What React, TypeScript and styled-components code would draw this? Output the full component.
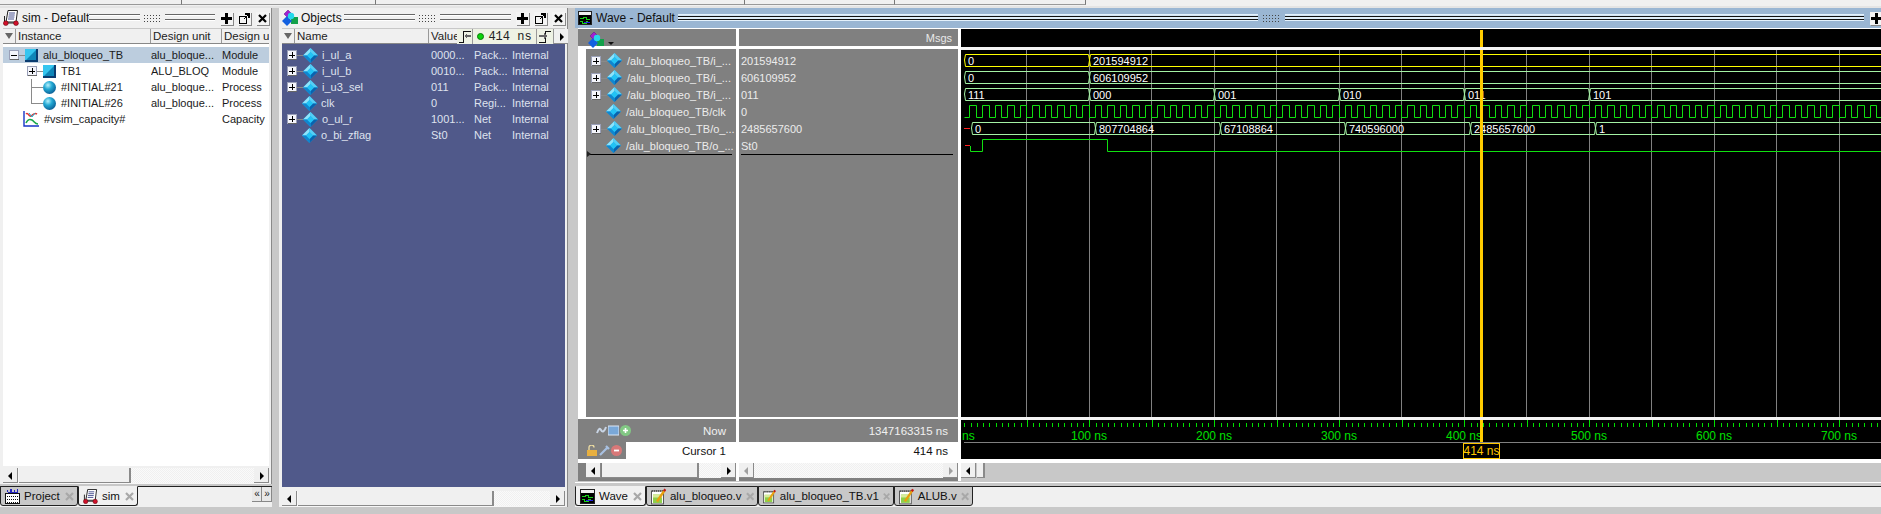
import React from 'react'
import styled, { createGlobalStyle } from 'styled-components'

const GlobalStyle = createGlobalStyle`
  html, body { margin: 0; padding: 0; background: #c8c8c8; overflow: hidden; }
  body { font-family: "Liberation Sans", Arial, sans-serif; font-size: 11px; color: #1a1a1a; }
`

const Desk = styled.div`
  width: 1881px;
  height: 514px;
  display: flex;
  flex-direction: column;
  overflow: hidden;
  background: #c8c8c8;
`

const ToolStrip = styled.div`
  display: flex;
  height: 6px;
  background: #f0f0f0;
  border-bottom: 2px solid #e4e4e4;
`

const ToolCell = styled.div<{ $w: number }>`
  width: ${p => p.$w}px;
  height: 5px;
  box-sizing: border-box;
  border-right: 1px solid #777;
  border-bottom: 1px solid #999;
`

const Columns = styled.div`
  display: flex;
  gap: 7px;
  height: 500px;
`

const Column = styled.div<{ $w: number }>`
  width: ${p => p.$w}px;
  display: flex;
  flex-direction: column;
  flex: none;
  overflow: hidden;
`

const Pane = styled.div<{ $h: number; $after?: number }>`
  position: relative;
  height: ${p => p.$h}px;
  margin-bottom: ${p => p.$after ?? 0}px;
  box-sizing: border-box;
  display: flex;
  flex-direction: column;
  background: #f0f0f0;
  padding: 0 2px 0 3px;
  border-right: 1px solid #8a8a8a;
  flex: none;
`

const TitleBar = styled.div<{ $blue?: boolean }>`
  height: 20px;
  display: flex;
  align-items: center;
  gap: 3px;
  flex: none;
  background: ${p => (p.$blue ? '#9ab6d3' : '#f0f0f0')};
`

const TitleText = styled.span<{ $w: number }>`
  width: ${p => p.$w}px;
  font-size: 12px;
  color: #111;
  white-space: nowrap;
  flex: none;
  margin-right: 2px;
`

const GripLines = styled.div<{ $blue?: boolean }>`
  flex: 1;
  height: 8px;
  background: ${p =>
    p.$blue
      ? 'linear-gradient(#e4f1fb 0 1px, #cfe2f3 1px 2px, #111 2px 3px, #dfeefa 3px 5px, #111 5px 6px, #e4f1fb 6px 7px, #9ab6d3 7px 8px)'
      : 'linear-gradient(#666 0 1px, #fff 1px 2px, #f0f0f0 2px 5px, #666 5px 6px, #fff 6px 7px, #f0f0f0 7px 8px)'};
`

const GripDots = styled.div`
  width: 19px;
  height: 8px;
  flex: none;
  background-image: radial-gradient(#444 0.7px, transparent 0.9px);
  background-size: 3px 3px;
`

const TitleButton = styled.button`
  width: 13px;
  height: 13px;
  padding: 0;
  margin-left: 2px;
  flex: none;
  display: flex;
  align-items: center;
  justify-content: center;
  background: #f4f4f4;
  border: 0;
  box-shadow: 1px 1px 0 #888;
`

const HeaderRow = styled.div`
  height: 16px;
  display: flex;
  flex: none;
  background: #f0f0f0;
  border-top: 1px solid #c8c8c8;
  border-bottom: 1px solid #888;
  box-sizing: border-box;
  overflow: hidden;
`

const FilterButton = styled.div`
  width: 12px;
  flex: none;
  position: relative;
  border-right: 1px solid #999;
  &::after {
    content: '';
    position: absolute;
    left: 2px;
    top: 4px;
    border: 4px solid transparent;
    border-top: 6px solid #666;
    border-bottom: 0;
  }
`

const HeaderCell = styled.div<{ $w: number }>`
  width: ${p => p.$w}px;
  flex: none;
  box-sizing: border-box;
  padding-left: 2px;
  line-height: 15px;
  font-size: 11.5px;
  color: #222;
  white-space: nowrap;
  overflow: hidden;
  border-right: 1px solid #999;
`

const TreeBody = styled.div`
  flex: 1;
  background: #fff;
  padding-top: 3px;
`

const ListBody = styled.div`
  flex: 1;
  background: #50598a;
  padding-top: 3px;
  color: #dfe2ee;
`

const Row = styled.div<{ $cols: string; $selected?: boolean }>`
  height: 16px;
  display: grid;
  grid-template-columns: ${p => p.$cols};
  align-items: center;
  background: ${p => (p.$selected ? '#bccdde' : 'transparent')};
`

const NameCell = styled.div<{ $indent: number }>`
  display: flex;
  align-items: center;
  height: 16px;
  padding-left: ${p => p.$indent}px;
  white-space: nowrap;
`

const Label = styled.span<{ $gap?: number }>`
  margin-left: ${p => p.$gap ?? 5}px;
`

const Cell = styled.div`
  white-space: nowrap;
  overflow: hidden;
`

const ScrollRow = styled.div<{ $bg?: string; $h?: number; $pad?: number; $top?: number }>`
  height: ${p => p.$h ?? 16}px;
  margin-top: ${p => p.$top ?? 0}px;
  display: flex;
  align-items: ${p => (p.$h ? 'flex-start' : 'stretch')};
  flex: none;
  padding-left: ${p => p.$pad ?? 0}px;
  background: ${p => p.$bg ?? '#f7f7f7'};
  box-sizing: border-box;
`

const ScrollBtn = styled.div<{ $right?: boolean; $off?: boolean }>`
  width: 15px;
  height: 15px;
  flex: none;
  position: relative;
  background: #f0f0f0;
  box-shadow: inset -1px -1px 0 #8a8a8a;
  &::after {
    content: '';
    position: absolute;
    top: 4px;
    left: ${p => (p.$right ? 6 : 5)}px;
    border-style: solid;
    border-color: transparent;
    border-width: 4px 0;
    ${p => (p.$right ? 'border-left-width: 4px;' : 'border-right-width: 4px;')}
    ${p => (p.$right ? 'border-left-color' : 'border-right-color')}: ${p => (p.$off ? '#a0a0a0' : '#000')};
  }
`

const ScrollThumb = styled.div<{ $w: number }>`
  width: ${p => p.$w}px;
  height: 15px;
  flex: none;
  margin-left: 1px;
  background: #f0f0f0;
  box-shadow: inset -2px -1px 0 #8a8a8a;
`

const ScrollTrack = styled.div<{ $bg?: string }>`
  flex: 1;
  height: 15px;
  background: ${p => p.$bg ?? 'repeating-conic-gradient(#f0f0f0 0 25%, #fafafa 0 50%) 0 0 / 2px 2px'};
`

const TabBar = styled.div`
  height: 21px;
  display: flex;
  align-items: flex-start;
  flex: none;
  background: #f0f0f0;
  border-top: 1px solid #222;
  box-sizing: border-box;
  position: relative;
`

const Tab = styled.div<{ $w: number; $active?: boolean }>`
  width: ${p => p.$w}px;
  height: 20px;
  box-sizing: border-box;
  display: flex;
  align-items: center;
  gap: 4px;
  padding: 0 3px 0 4px;
  margin-top: -1px;
  flex: none;
  font-size: 11.5px;
  background: ${p => (p.$active ? '#f0f0f0' : '#c8c8c8')};
  color: #111;
  border: 1px solid #222;
  border-top-color: ${p => (p.$active ? '#f0f0f0' : '#222')};
  border-radius: 0 0 3px 3px;
  white-space: nowrap;
  & > svg:last-child { margin-left: auto; }
`

const TabArrows = styled.div`
  margin-left: auto;
  display: flex;
`

const TabArrow = styled.div`
  width: 10px;
  height: 15px;
  background: #e8e8e8;
  box-shadow: inset -1px -1px 0 #888;
  font-size: 10px;
  line-height: 14px;
  text-align: center;
  color: #222;
`

const TimeBar = styled.div`
  position: absolute;
  left: 178px;
  top: 21px;
  width: 110px;
  height: 15px;
  display: flex;
  background: #eef2e4;
`

const TimeBtn = styled.div<{ $w: number }>`
  width: ${p => p.$w}px;
  flex: none;
  display: flex;
  align-items: center;
  justify-content: center;
  gap: 4px;
  box-sizing: border-box;
  border-right: 1px solid #999;
  font-family: "Liberation Mono", "Courier New", monospace;
  font-size: 12px;
  color: #222;
`

const GreenDot = styled.span`
  width: 7px;
  height: 7px;
  border-radius: 50%;
  background: #0bd40b;
  border: 1px solid #087a08;
  box-sizing: border-box;
`

/* wave window */
const WavePane = styled.div`
  height: 475px;
  margin-bottom: 3px;
  flex: none;
  display: flex;
  flex-direction: column;
  background: #c8c8c8;
`

const WaveTitle = styled(TitleBar)`
  width: 1346px;
  padding-left: 3px;
  gap: 4px;
  box-sizing: border-box;
`

const WaveGrid = styled.div`
  display: grid;
  grid-template-columns: 158px 219px 921px;
  column-gap: 3px;
  padding: 1px 0 0 3px;
  background: linear-gradient(90deg, #c8c8c8 0 3px, #fff 3px);
  height: 452px;
`

const WaveCol = styled.div`
  display: flex;
  flex-direction: column;
  min-width: 0;
`

const ColHeader = styled.div`
  height: 17px;
  flex: none;
  display: flex;
  align-items: flex-start;
  justify-content: space-between;
  padding: 3px 6px 0 10px;
  box-sizing: border-box;
  background: #808080;
  color: #e8e8e8;
`

const HeaderPicker = styled.div`
  display: flex;
  align-items: flex-end;
  gap: 4px;
  height: 16px;
  &::after {
    content: '';
    margin-bottom: 3px;
    border: 3px solid transparent;
    border-top: 3px solid #111;
    border-bottom: 0;
  }
`

const ColBody = styled.div<{ $gutter?: boolean }>`
  height: 368px;
  margin-top: 3px;
  flex: none;
  padding-top: 3px;
  box-sizing: border-box;
  color: #ececec;
  background: ${p => (p.$gutter ? 'linear-gradient(90deg, #fff 0 8px, #808080 8px)' : '#808080')};
`

const SignalRow = styled.div<{ $indent?: number }>`
  height: 17px;
  display: flex;
  align-items: center;
  padding-left: ${p => p.$indent ?? 0}px;
  white-space: nowrap;
`

const RuleLine = styled.div<{ $left: number; $right: number; $marker?: boolean }>`
  position: relative;
  height: 1px;
  margin: 0 ${p => p.$right}px 0 ${p => p.$left}px;
  background: #000;
  ${p =>
    p.$marker &&
    `&::before {
      content: '';
      position: absolute;
      left: -3px;
      top: -3px;
      border: 3px solid transparent;
      border-left: 4px solid #222;
      border-right: 0;
    }`}
`

const NowRow = styled.div<{ $h: number; $white?: boolean; $pad: number }>`
  height: ${p => p.$h}px;
  flex: none;
  display: flex;
  align-items: center;
  justify-content: flex-end;
  padding-right: ${p => p.$pad}px;
  color: ${p => (p.$white ? '#111' : '#f0f0f0')};
  background: ${p => (p.$white ? '#fff' : '#808080')};
  font-size: 11.5px;
`

const CursorNames = styled.div`
  height: 17px;
  flex: none;
  display: flex;
  background: #808080;
`

const FooterNowRow = styled.div`
  height: 23px;
  margin-top: 2px;
  flex: none;
  display: flex;
  align-items: center;
  justify-content: space-between;
  padding: 0 10px 0 9px;
  background: #808080;
  color: #f0f0f0;
  font-size: 11.5px;
`

const FooterIcons = styled.div`
  display: flex;
  align-items: center;
  gap: 1px;
  width: 48px;
  flex: none;
  padding-left: 9px;
  box-sizing: border-box;
`

const CursorText = styled.div`
  flex: 1;
  background: #fff;
  color: #111;
  text-align: right;
  padding-right: 10px;
  line-height: 18px;
  font-size: 11.5px;
`

const Canvas = styled.svg`
  display: block;
  flex: none;
  background: #000;
  font-family: "Liberation Sans", Arial, sans-serif;
  font-size: 11px;
`

const WaveFooter = styled.div`
  height: 3px;
  flex: none;
  background: linear-gradient(#c8c8c8 0 1px, #fff 1px 2px, #c8c8c8 2px);
`

/* little drawings */
const PlusBox = ({ minus, tail = 15 }: { minus?: boolean; tail?: number }) => (
  <svg width={tail + 1} height={16} shapeRendering="crispEdges">
    <line x1={10} y1={8.5} x2={tail + 1} y2={8.5} stroke="#8a8a8a" />
    <rect x={0.5} y={3.5} width={9} height={9} fill="#f4f5fb" stroke="#9aa0b8" />
    <rect x={1} y={12} width={9} height={1} fill="#666" />
    <line x1={2} y1={8.5} x2={8} y2={8.5} stroke="#000" />
    {!minus && <line x1={5.5} y1={5} x2={5.5} y2={11} stroke="#000" />}
  </svg>
)

const Branch = ({ last }: { last?: boolean }) => (
  <svg width={16} height={16} shapeRendering="crispEdges">
    <line x1={4.5} y1={0} x2={4.5} y2={last ? 9 : 16} stroke="#8a8a8a" />
    <line x1={4.5} y1={8.5} x2={16} y2={8.5} stroke="#8a8a8a" />
  </svg>
)

const Diamond = () => (
  <svg width={15} height={15} viewBox="0 0 15 15">
    <polygon points="7.5,0 15,7.5 7.5,15 0,7.5" fill="#1aa5e6" />
    <polygon points="7.5,0 0,7.5 4,7.5 7.5,4" fill="#8ee4fb" />
    <polygon points="7.5,0 15,7.5 11,7.5 7.5,4" fill="#55cff5" />
    <polygon points="15,7.5 7.5,15 7.5,11 11,7.5" fill="#0a62ad" />
    <polygon points="0,7.5 7.5,15 7.5,11 4,7.5" fill="#0f86cf" />
    <polygon points="7.5,4 11,7.5 7.5,11 4,7.5" fill="#22c3f5" />
  </svg>
)

const Cube = () => (
  <svg width={13} height={13} viewBox="0 0 13 13" shapeRendering="crispEdges">
    <rect width={13} height={13} fill="#0e5f8e" />
    <rect x={0} y={0} width={11} height={11} fill="#35c5ef" />
    <polygon points="11,0 13,0 13,13 0,13 0,11 11,11" fill="#0a3c70" />
    <polygon points="1,11 11,1 11,11" fill="#0f86b8" shapeRendering="auto" />
  </svg>
)

const Sphere = () => (
  <svg width={13} height={13} viewBox="0 0 13 13">
    <defs>
      <radialGradient id="ball" cx="38%" cy="32%" r="70%">
        <stop offset="0%" stopColor="#b8f0fb" />
        <stop offset="45%" stopColor="#23a9d4" />
        <stop offset="100%" stopColor="#0a5f96" />
      </radialGradient>
    </defs>
    <circle cx={6.5} cy={6.5} r={6.5} fill="url(#ball)" />
  </svg>
)

const CapacityIcon = () => (
  <svg width={16} height={16} viewBox="0 0 16 16" fill="none">
    <path d="M1 0V15H16" stroke="#1836c8" strokeWidth={1.4} />
    <path d="M3 3C5 1 6 6 8 5S11 1 14 3" stroke="#e23434" strokeWidth={1.6} />
    <path d="M3 12C5 8 7 8 9 9S12 13 15 13" stroke="#17a84a" strokeWidth={1.6} />
    <path d="M6 2L9 6M12 2L9 6" stroke="#18b6d8" strokeWidth={1} />
  </svg>
)

const SimIcon = ({ size = 16 }: { size?: number }) => (
  <svg width={size} height={size} viewBox="0 0 16 16" fill="none">
    <path d="M5 .5H14.5L13 12H3Z" fill="#fff" stroke="#222" />
    <path d="M6 3H12M5.7 5H11.7M5.4 7H11.4M5 9H11" stroke="#46508f" />
    <path d="M1.5 6V13H14" stroke="#222" />
    <circle cx={2.8} cy={13.2} r={2.4} fill="#d0102a" stroke="#500" strokeWidth={0.5} />
    <circle cx={13} cy={13.2} r={2.4} fill="#d0102a" stroke="#500" strokeWidth={0.5} />
  </svg>
)

const ObjectsIcon = () => (
  <svg width={16} height={16} viewBox="0 0 16 16">
    <polygon points="6,0 10,4 6,8 2,4" fill="#a020d0" stroke="#5a0f80" strokeWidth={0.5} />
    <rect x={9} y={7} width={7} height={7} fill="#12a04a" />
    <polygon points="5,6 10,11 5,16 0,11" fill="#1260e0" />
    <circle cx={9} cy={6} r={3.2} fill="#25d8ea" />
  </svg>
)

const WaveIcon = ({ size = 14 }: { size?: number }) => (
  <svg width={size} height={size} viewBox="0 0 14 14" shapeRendering="crispEdges">
    <rect width={14} height={14} fill="#222" />
    <rect x={1} y={1} width={12} height={3} fill="#f0f0f0" />
    <rect x={1} y={4} width={12} height={9} fill="#000" />
    <path d="M2 7H5V6H8V8H12M2 10H4V12H8V10H10" fill="none" stroke="#18d018" />
    <path d="M6 11H12" stroke="#2222e0" />
  </svg>
)

const NoteIcon = () => (
  <svg width={16} height={17} viewBox="0 0 15 16">
    <rect x={0.5} y={2.5} width={12} height={13} fill="#fff" stroke="#555" />
    <path d="M1 2.5h11" stroke="#222" strokeDasharray="1 1" />
    <rect x={2} y={6} width={9} height={8.5} fill="#8ecf4a" />
    <rect x={2} y={6} width={9} height={3} fill="#d8ec9a" />
    <path d="M6 13L13.5 2" stroke="#e8a010" strokeWidth={2.4} />
    <path d="M13 2.6L14.4.8" stroke="#c01818" strokeWidth={2.4} />
  </svg>
)

const ProjectIcon = () => (
  <svg width={15} height={15} viewBox="0 0 15 15" shapeRendering="crispEdges">
    <rect x={0.5} y={4.5} width={14} height={10} fill="#fff" stroke="#111" />
    <path d="M2 7h11M2 10h11M2 13h11" stroke="#111" strokeDasharray="1 1" />
    <path d="M2 1h1v2h-1zM5 0h2v3h-2zM9 1h1v2h-1zM12 0h1v3h-1zM3 3h10v1h-10z" fill="#2424c0" />
  </svg>
)

const CloseX = ({ color = '#a8a8a8' }: { color?: string }) => (
  <svg width={9} height={9} viewBox="0 0 9 9">
    <path d="M1 1L8 8M8 1L1 8" stroke={color} strokeWidth={2.2} />
  </svg>
)

const PlusGlyph = () => (
  <svg width={11} height={11} shapeRendering="crispEdges">
    <path d="M4 0h3v4h4v3h-4v4h-3v-4h-4v-3h4z" fill="#000" />
  </svg>
)

const UndockGlyph = () => (
  <svg width={11} height={11} viewBox="0 0 11 11" fill="none" shapeRendering="crispEdges">
    <rect x={0.5} y={3.5} width={7} height={7} stroke="#000" />
    <path d="M5 6L9 2M6 1h4v4" stroke="#000" strokeWidth={1.4} />
  </svg>
)

const TitleButtons = () => (
  <>
    <TitleButton><PlusGlyph /></TitleButton>
    <TitleButton><UndockGlyph /></TitleButton>
    <TitleButton><CloseX color="#000" /></TitleButton>
  </>
)

// step shape with an arrow, mirrored for the next-cursor button
const CursorJump = ({ next }: { next?: boolean }) => (
  <svg width={12} height={13} viewBox="0 0 12 13" fill="none" shapeRendering="crispEdges">
    {next ? (
      <>
        <path d="M0 12.5H6.5V1.5H12" stroke="#111" />
        <path d="M0 5h5V3l3 3-3 3V7H0z" fill="#666" />
      </>
    ) : (
      <>
        <path d="M0 12.5H4.5V1.5H12" stroke="#111" />
        <path d="M12 5H8V3L5 6l3 3V7h4z" fill="#666" />
      </>
    )}
  </svg>
)

const FaintIcon = ({ kind }: { kind: 'net' | 'doc' | 'add' | 'lock' | 'wrench' | 'del' }) => (
  <svg width={11} height={11} viewBox="0 0 11 11" fill="none">
    {kind === 'net' && <path d="M1 8C3 3 4 3 5 5S8 8 10 2" stroke="#c8d4e4" strokeWidth={2} />}
    {kind === 'doc' && <rect x={0} y={1} width={11} height={9} fill="#7aa8d8" stroke="#dbe6f3" />}
    {kind === 'add' && <><circle cx={5.5} cy={5.5} r={5.5} fill="#82c884" /><path d="M3 5.5h5M5.5 3v5" stroke="#fff" strokeWidth={1.6} /></>}
    {kind === 'lock' && <><rect x={0} y={5} width={10} height={6} fill="#e8b040" /><path d="M2 5V2.5A2.5 2.5 0 0 1 7 2.5" stroke="#e8d8a0" strokeWidth={1.4} /></>}
    {kind === 'wrench' && <path d="M1 10L8 3M7 1L10 4" stroke="#a8c0e0" strokeWidth={2.2} />}
    {kind === 'del' && <><circle cx={5.5} cy={5.5} r={5.5} fill="#d87878" /><path d="M3 5.5h5" stroke="#fff" strokeWidth={1.8} /></>}
  </svg>
)

/* wave data, in page pixels */
const GRID_X = [1025, 1088, 1150, 1213, 1275, 1338, 1400, 1463, 1525, 1588, 1650, 1713, 1775, 1838]
const BUS_GREEN = '#a4f2a4'
const LINE_GREEN = '#10e010'

interface BusSegment { from: number; text: string }
interface BusRow { top: number; color: string; segments: BusSegment[] }

const BUSES: BusRow[] = [
  { top: 54, color: '#ffff00', segments: [{ from: 963, text: '0' }, { from: 1088, text: '201594912' }] },
  { top: 71, color: BUS_GREEN, segments: [{ from: 963, text: '0' }, { from: 1088, text: '606109952' }] },
  {
    top: 88,
    color: BUS_GREEN,
    segments: [
      { from: 963, text: '111' },
      { from: 1088, text: '000' },
      { from: 1213, text: '001' },
      { from: 1338, text: '010' },
      { from: 1463, text: '011' },
      { from: 1588, text: '101' },
    ],
  },
  {
    top: 122,
    color: BUS_GREEN,
    segments: [
      { from: 970, text: '0' },
      { from: 1094, text: '807704864' },
      { from: 1219, text: '67108864' },
      { from: 1344, text: '740596000' },
      { from: 1469, text: '2485657600' },
      { from: 1594, text: '1' },
    ],
  },
]

const clockPath = () => {
  let d = 'M963.5 117.5H968.5'
  for (let x = 968.5; x < 1885; x += 12.5) {
    d += `V105.5H${Math.round(x + 6.5) + 0.5}V117.5H${Math.round(x + 12.5) + 0.5}`
  }
  return d
}

const Bus = ({ row }: { row: BusRow }) => {
  const bottom = row.top + 12
  const mid = row.top + 6
  return (
    <g>
      {row.segments.map((seg, i) => {
        const end = row.segments[i + 1]?.from ?? 1900
        return (
          <g key={seg.from}>
            <path
              d={`M${seg.from + 1.5} ${row.top + 0.5}H${end - 0.5}L${end + 0.5} ${mid}L${end - 0.5} ${bottom + 0.5}H${seg.from + 1.5}L${seg.from + 0.5} ${mid}Z`}
              fill="none"
              stroke={row.color}
            />
            <text x={seg.from + 4} y={bottom - 1.5} fill="#fff">{seg.text}</text>
          </g>
        )
      })}
    </g>
  )
}

const Ruler = () => {
  const ticks: React.ReactNode[] = []
  for (let i = 0; i < 150; i++) {
    const x = Math.round(963.3 + i * 6.25) + 0.5
    const major = i % 10 === 0 && i > 0
    ticks.push(<line key={i} x1={x} x2={x} y1={major ? 420 : 423} y2={427} stroke="#00e000" />)
  }
  return (
    <g>
      {ticks}
      <text x={961} y={440} fill="#00e000" fontSize={12}>ns</text>
      {[1, 2, 3, 4, 5, 6, 7].map(n => (
        <text key={n} x={963 + n * 125} y={440} fill="#00e000" fontSize={12} textAnchor="middle">
          {n}00 ns
        </text>
      ))}
      <line x1={963} x2={1881} y1={442.5} y2={442.5} stroke="#808080" />
    </g>
  )
}

const WaveCanvas = () => (
  <Canvas width={921} height={430} viewBox="960 29 921 430">
    {GRID_X.map(x => (
      <line key={x} x1={x + 0.5} x2={x + 0.5} y1={50} y2={417} stroke="#808080" />
    ))}
    <rect x={960} y={47} width={921} height={3} fill="#f4f4f4" />
    <rect x={960} y={417} width={921} height={3} fill="#f4f4f4" />
    {BUSES.map(row => <Bus key={row.top} row={row} />)}
    <path d={clockPath()} fill="none" stroke={LINE_GREEN} />
    <path d="M963 128.5H969" stroke="#ff2020" />
    <path d="M964 145.5H969" stroke="#ff2020" />
    <path d="M969.5 146V151.5H981.5V139.5H1106.5V151.5H1881" fill="none" stroke={LINE_GREEN} />
    <Ruler />
    <rect x={1479} y={30} width={3} height={17} fill="#ffcc00" />
    <rect x={1479} y={50} width={3} height={367} fill="#ffcc00" />
    <rect x={1479} y={420} width={3} height={22} fill="#ffcc00" />
    <rect x={1462.5} y={443.5} width={36} height={15} fill="#000" stroke="#ffc800" />
    <text x={1480.5} y={455} fill="#ffc800" fontSize={12} textAnchor="middle">414 ns</text>
  </Canvas>
)

const SIM_COLS = '148px 71px 48px'
const OBJ_COLS = '149px 43px 38px 1fr'

const OBJECTS = [
  { name: 'i_ul_a', value: '0000...', kind: 'Pack...', expand: true },
  { name: 'i_ul_b', value: '0010...', kind: 'Pack...', expand: true },
  { name: 'i_u3_sel', value: '011', kind: 'Pack...', expand: true },
  { name: 'clk', value: '0', kind: 'Regi...', expand: false },
  { name: 'o_ul_r', value: '1001...', kind: 'Net', expand: true },
  { name: 'o_bi_zflag', value: 'St0', kind: 'Net', expand: false },
]

const SIGNALS = [
  { name: '/alu_bloqueo_TB/i_...', value: '201594912', expand: true },
  { name: '/alu_bloqueo_TB/i_...', value: '606109952', expand: true },
  { name: '/alu_bloqueo_TB/i_...', value: '011', expand: true },
  { name: '/alu_bloqueo_TB/clk', value: '0', expand: false },
  { name: '/alu_bloqueo_TB/o_...', value: '2485657600', expand: true },
  { name: '/alu_bloqueo_TB/o_...', value: 'St0', expand: false },
]

export default function App() {
  return (
    <Desk>
      <GlobalStyle />
      <ToolStrip>
        <ToolCell $w={182} />
        <ToolCell $w={194} />
        <ToolCell $w={369} />
        <ToolCell $w={150} />
        <ToolCell $w={191} />
      </ToolStrip>
      <Columns>
        <Column $w={272}>
          <Pane $h={476} $after={2}>
            <TitleBar>
              <SimIcon />
              <TitleText $w={62}>sim - Default</TitleText>
              <GripLines />
              <GripDots />
              <GripLines />
              <TitleButtons />
            </TitleBar>
            <HeaderRow>
              <FilterButton />
              <HeaderCell $w={135}>Instance</HeaderCell>
              <HeaderCell $w={71}>Design unit</HeaderCell>
              <HeaderCell $w={60}>Design un</HeaderCell>
            </HeaderRow>
            <TreeBody>
              <Row $cols={SIM_COLS} $selected>
                <NameCell $indent={6}><PlusBox minus /><Cube /><Label>alu_bloqueo_TB</Label></NameCell>
                <Cell>alu_bloque...</Cell>
                <Cell>Module</Cell>
              </Row>
              <Row $cols={SIM_COLS}>
                <NameCell $indent={24}><PlusBox /><Cube /><Label>TB1</Label></NameCell>
                <Cell>ALU_BLOQ</Cell>
                <Cell>Module</Cell>
              </Row>
              <Row $cols={SIM_COLS}>
                <NameCell $indent={24}><Branch /><Sphere /><Label>#INITIAL#21</Label></NameCell>
                <Cell>alu_bloque...</Cell>
                <Cell>Process</Cell>
              </Row>
              <Row $cols={SIM_COLS}>
                <NameCell $indent={24}><Branch last /><Sphere /><Label>#INITIAL#26</Label></NameCell>
                <Cell>alu_bloque...</Cell>
                <Cell>Process</Cell>
              </Row>
              <Row $cols={SIM_COLS}>
                <NameCell $indent={20}><CapacityIcon /><Label>#vsim_capacity#</Label></NameCell>
                <Cell />
                <Cell>Capacity</Cell>
              </Row>
            </TreeBody>
            <ScrollRow $top={2}>
              <ScrollBtn />
              <ScrollThumb $w={112} />
              <ScrollTrack />
              <ScrollBtn $right />
            </ScrollRow>
          </Pane>
          <TabBar>
            <Tab $w={78}><ProjectIcon /><span>Project</span><CloseX /></Tab>
            <Tab $w={60} $active><SimIcon size={15} /><span>sim</span><CloseX /></Tab>
            <TabArrows>
              <TabArrow>«</TabArrow>
              <TabArrow>»</TabArrow>
            </TabArrows>
          </TabBar>
        </Column>

        <Column $w={289}>
          <Pane $h={499}>
            <TitleBar>
              <ObjectsIcon />
              <TitleText $w={38}>Objects</TitleText>
              <GripLines />
              <GripDots />
              <GripLines />
              <TitleButtons />
            </TitleBar>
            <HeaderRow>
              <FilterButton />
              <HeaderCell $w={134}>Name</HeaderCell>
              <HeaderCell $w={60}>Value</HeaderCell>
            </HeaderRow>
            <TimeBar>
              <TimeBtn $w={16}><CursorJump /></TimeBtn>
              <TimeBtn $w={64}><GreenDot />414 ns</TimeBtn>
              <TimeBtn $w={17}><CursorJump next /></TimeBtn>
              <ScrollBtn $right />
            </TimeBar>
            <ListBody>
              {OBJECTS.map(o => (
                <Row key={o.name} $cols={OBJ_COLS}>
                  <NameCell $indent={o.expand ? 5 : 20}>
                    {o.expand && <PlusBox />}
                    <Diamond />
                    <Label $gap={4}>{o.name}</Label>
                  </NameCell>
                  <Cell>{o.value}</Cell>
                  <Cell>{o.kind}</Cell>
                  <Cell>Internal</Cell>
                </Row>
              ))}
            </ListBody>
            <ScrollRow $top={4}>
              <ScrollBtn />
              <ScrollThumb $w={196} />
              <ScrollTrack />
              <ScrollBtn $right />
            </ScrollRow>
          </Pane>
        </Column>

        <Column $w={1306}>
          <WavePane>
            <WaveTitle $blue>
              <WaveIcon />
              <TitleText $w={76}>Wave - Default</TitleText>
              <GripLines $blue />
              <GripDots />
              <GripLines $blue />
              <TitleButtons />
            </WaveTitle>
            <WaveGrid>
              <WaveCol>
                <ColHeader>
                  <HeaderPicker><ObjectsIcon /></HeaderPicker>
                </ColHeader>
                <ColBody $gutter>
                  {SIGNALS.map((s, i) => (
                    <SignalRow key={i} $indent={s.expand ? 13 : 28}>
                      {s.expand && <PlusBox />}
                      <Diamond />
                      <Label>{s.name}</Label>
                    </SignalRow>
                  ))}
                  <RuleLine $left={12} $right={4} $marker />
                </ColBody>
                <FooterNowRow>
                  <FooterIcons>
                    <FaintIcon kind="net" />
                    <FaintIcon kind="doc" />
                    <FaintIcon kind="add" />
                  </FooterIcons>
                  <span>Now</span>
                </FooterNowRow>
                <CursorNames>
                  <FooterIcons>
                    <FaintIcon kind="lock" />
                    <FaintIcon kind="wrench" />
                    <FaintIcon kind="del" />
                  </FooterIcons>
                  <CursorText>Cursor 1</CursorText>
                </CursorNames>
                <ScrollRow $bg="#808080" $h={18} $pad={8} $top={4}>
                  <ScrollBtn />
                  <ScrollThumb $w={97} />
                  <ScrollTrack />
                  <ScrollBtn $right />
                </ScrollRow>
              </WaveCol>

              <WaveCol>
                <ColHeader>
                  <span />
                  <span>Msgs</span>
                </ColHeader>
                <ColBody>
                  {SIGNALS.map((s, i) => (
                    <SignalRow key={i} $indent={2}>{s.value}</SignalRow>
                  ))}
                  <RuleLine $left={2} $right={5} />
                </ColBody>
                <FooterNowRow>
                  <span />
                  <span>1347163315 ns</span>
                </FooterNowRow>
                <NowRow $h={17} $white $pad={10}>414 ns</NowRow>
                <ScrollRow $bg="#808080" $h={18} $top={4}>
                  <ScrollBtn $off />
                  <ScrollTrack />
                  <ScrollBtn $right $off />
                </ScrollRow>
              </WaveCol>

              <WaveCol>
                <WaveCanvas />
                <ScrollRow $bg="#c8c8c8" $h={18} $top={4}>
                  <ScrollBtn />
                  <ScrollThumb $w={8} />
                  <ScrollTrack $bg="#c8c8c8" />
                </ScrollRow>
              </WaveCol>
            </WaveGrid>
            <WaveFooter />
          </WavePane>
          <TabBar>
            <Tab $w={71} $active><WaveIcon size={15} /><span>Wave</span><CloseX /></Tab>
            <Tab $w={112}><NoteIcon /><span>alu_bloqueo.v</span><CloseX /></Tab>
            <Tab $w={136}><NoteIcon /><span>alu_bloqueo_TB.v1</span><CloseX /></Tab>
            <Tab $w={79}><NoteIcon /><span>ALUB.v</span><CloseX /></Tab>
          </TabBar>
        </Column>
      </Columns>
    </Desk>
  )
}
